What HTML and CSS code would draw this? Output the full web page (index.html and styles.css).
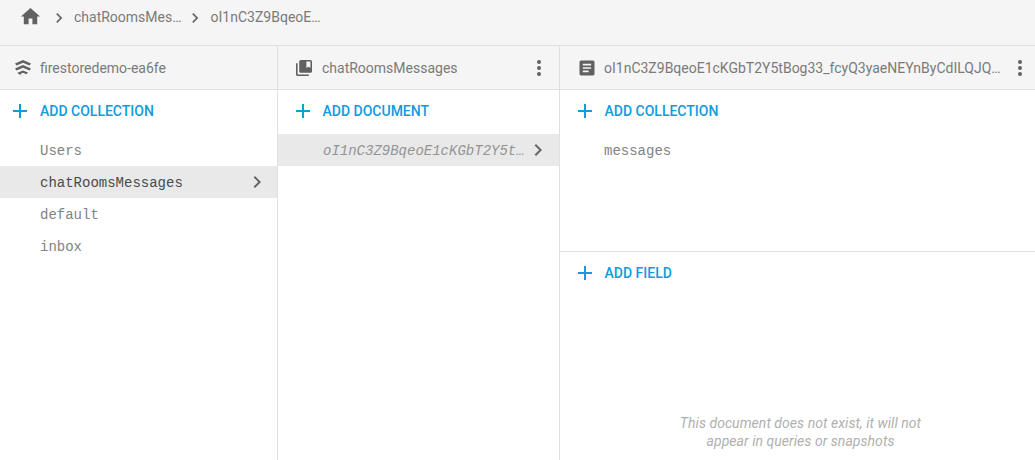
FILE: index.html
```html
<!DOCTYPE html>
<html lang="en">
<head>
<meta charset="utf-8">
<title>Firestore</title>
<link rel="stylesheet" href="styles.css">
</head>
<body>
<nav class="crumbs">
  <svg class="home" viewBox="0 0 24 24"><path d="M10 20v-6h4v6h5v-8h3L12 3 2 12h3v8z"/></svg>
  <svg class="crumb-sep first" viewBox="0 0 24 24"><path d="M8.6 16.6 13.2 12 8.6 7.4 10 6l6 6-6 6z"/></svg>
  <span class="crumb c1">chatRoomsMes…</span>
  <svg class="crumb-sep" viewBox="0 0 24 24"><path d="M8.6 16.6 13.2 12 8.6 7.4 10 6l6 6-6 6z"/></svg>
  <span class="crumb">oI1nC3Z9BqeoE…</span>
</nav>
<main class="panels">
  <section class="panel p1">
    <header class="head">
      <svg class="head-icon small" viewBox="0 0 16 16"><path d="M8 0l8 3.600-1.500 2L8 2.700 1.500 5.600 0 3.600zM8 5l8 3.600-1.500 2L8 7.700l-6.500 2.900-1.500-2zM8 10.500l5 2-1.500 1.700L8 12.800l-3 1.400 3 1.800-4.500-2-1-1.200z"/></svg>
      <span class="head-title">firestoredemo-ea6fe</span>
    </header>
    <div class="add"><svg class="plus" viewBox="0 0 16 16"><path d="M7 1h2v6h6v2H9v6H7V9H1V7h6z"/></svg><span>ADD COLLECTION</span></div>
    <ul class="list">
      <li class="item">Users</li>
      <li class="item active"><span class="label">chatRoomsMessages</span><svg class="chev" viewBox="0 0 24 24"><path d="M8.600 16.600 13.200 12 8.600 7.400 10 6l6 6-6 6z"/></svg></li>
      <li class="item">default</li>
      <li class="item">inbox</li>
    </ul>
  </section>
  <section class="panel p2">
    <header class="head">
      <svg class="head-icon small" viewBox="2 2 20 20"><path d="M4 6H2v14c0 1.100.9 2 2 2h14v-2H4zm16-4H8c-1.100 0-2 .9-2 2v12c0 1.100.9 2 2 2h12c1.100 0 2-.9 2-2V4c0-1.100-.9-2-2-2zm0 10-2.500-1.500L15 12V4h5z"/></svg>
      <span class="head-title">chatRoomsMessages</span>
      <svg class="more" viewBox="0 0 24 24"><path d="M12 8a2 2 0 1 0 0-4 2 2 0 0 0 0 4zm0 2a2 2 0 1 0 0 4 2 2 0 0 0 0-4zm0 6a2 2 0 1 0 0 4 2 2 0 0 0 0-4z"/></svg>
    </header>
    <div class="add"><svg class="plus" viewBox="0 0 16 16"><path d="M7 1h2v6h6v2H9v6H7V9H1V7h6z"/></svg><span>ADD DOCUMENT</span></div>
    <ul class="list">
      <li class="item active doc"><span class="label">oI1nC3Z9BqeoE1cKGbT2Y5t…</span><svg class="chev" viewBox="0 0 24 24"><path d="M8.600 16.600 13.200 12 8.600 7.400 10 6l6 6-6 6z"/></svg></li>
    </ul>
  </section>
  <section class="panel p3">
    <header class="head">
      <svg class="head-icon" viewBox="0 0 24 24"><path d="M19 3H5c-1.100 0-2 .9-2 2v14c0 1.100.9 2 2 2h14c1.100 0 2-.9 2-2V5c0-1.100-.9-2-2-2zm-5 14H7v-2h7zm3-4H7v-2h10zm0-4H7V7h10z"/></svg>
      <span class="head-title">oI1nC3Z9BqeoE1cKGbT2Y5tBog33_fcyQ3yaeNEYnByCdILQJQ…</span>
      <svg class="more" viewBox="0 0 24 24"><path d="M12 8a2 2 0 1 0 0-4 2 2 0 0 0 0 4zm0 2a2 2 0 1 0 0 4 2 2 0 0 0 0-4zm0 6a2 2 0 1 0 0 4 2 2 0 0 0 0-4z"/></svg>
    </header>
    <div class="upper">
      <div class="add"><svg class="plus" viewBox="0 0 16 16"><path d="M7 1h2v6h6v2H9v6H7V9H1V7h6z"/></svg><span>ADD COLLECTION</span></div>
      <ul class="list"><li class="item">messages</li></ul>
    </div>
    <div class="lower">
      <div class="add"><svg class="plus" viewBox="0 0 16 16"><path d="M7 1h2v6h6v2H9v6H7V9H1V7h6z"/></svg><span>ADD FIELD</span></div>
      <p class="note">This document does not exist, it will not<br>appear in queries or snapshots</p>
    </div>
  </section>
</main>
</body>
</html>
```
FILE: styles.css
```css
* { box-sizing: border-box; }
html, body { height: 100%; }
body {
  margin: 0;
  display: flex;
  flex-direction: column;
  height: 460px;
  overflow: hidden;
  background: #fff;
  color: #757575;
  font-family: Roboto, "Liberation Sans", sans-serif;
}
.crumbs {
  flex: 0 0 46px;
  display: flex;
  align-items: flex-start;
  padding: 6px 0 0 18.500px;
  background: #f5f5f5;
  border-bottom: 1px solid #e0e0e0;
  font-size: 14px;
  color: #7a7a7a;
}
.home { width: 23px; height: 23px; margin-top: -1px; fill: #616161; flex: none; }
.crumb-sep { width: 20px; height: 20px; margin-top: 2px; margin-left: 3px; fill: #666; flex: none; }
.crumb-sep.first { margin-left: 7px; }
.crumb { line-height: 23px; margin-left: 6px; }
.crumb.c1 { margin-left: 5.500px; }
.panels { flex: 1; display: flex; min-height: 0; }
.panel { display: flex; flex-direction: column; min-width: 0; }
.p1 { flex: 0 0 278px; border-right: 1px solid #e0e0e0; }
.p2 { flex: 0 0 282px; border-right: 1px solid #e0e0e0; }
.p3 { flex: 1; }
.head {
  flex: 0 0 44px;
  display: flex;
  align-items: center;
  padding-left: 15px;
  background: #f5f5f5;
  border-bottom: 1px solid #e0e0e0;
  font-size: 14px;
}
.p2 .head { padding-left: 18px; }
.p3 .head { padding-left: 16.500px; }
.head-icon { width: 20px; height: 20px; fill: #616161; flex: none; }
.head-icon.small { width: 16px; height: 16px; }
.head-title { margin-left: 9px; white-space: nowrap; color: #7a7a7a; }
.p2 .head-title { margin-left: 10px; }
.p3 .head-title { margin-left: 7.500px; }
.more { width: 24px; height: 24px; fill: #616161; margin-left: auto; margin-right: 8px; flex: none; }
.p3 .more { margin-right: 3px; }
.add {
  flex: none;
  height: 44px;
  padding-bottom: 2px;
  display: flex;
  align-items: center;
  padding-left: 12px;
  font-size: 14px;
  font-weight: 500;
  color: #0f9bdc;
}
.p2 .add { padding-left: 17px; }
.p3 .add { padding-left: 17px; }
.add span { margin-left: 12px; }
.p2 .add span, .p3 .add span { margin-left: 11.500px; }
.plus { width: 16px; height: 16px; fill: #0f9bdc; flex: none; }
.list { list-style: none; margin: 0; padding: 0; }
.item {
  height: 32px;
  display: flex;
  align-items: center;
  padding-left: 40px;
  padding-top: 2px;
  font-family: "Liberation Mono", monospace;
  font-size: 14px;
  color: #828282;
}
.active { background: #e9e9e9; color: #4a4a4a; }
.doc { padding-left: 45px; font-style: italic; color: #949494; }
.chev { width: 24px; height: 24px; fill: #666; margin-left: auto; margin-right: 8px; margin-top: -2px; flex: none; }
.doc .chev { margin-right: 9px; }
.p3 .item { padding-left: 44px; }
.upper { flex: 0 0 162px; border-bottom: 1px solid #e0e0e0; }
.lower { flex: 1; display: flex; flex-direction: column; }
.note {
  margin: auto 0 10px;
  padding-left: 6px;
  text-align: center;
  font-size: 14px;
  font-style: italic;
  letter-spacing: .05px;
  line-height: 18px;
  color: #b0b0b0;
}
```
